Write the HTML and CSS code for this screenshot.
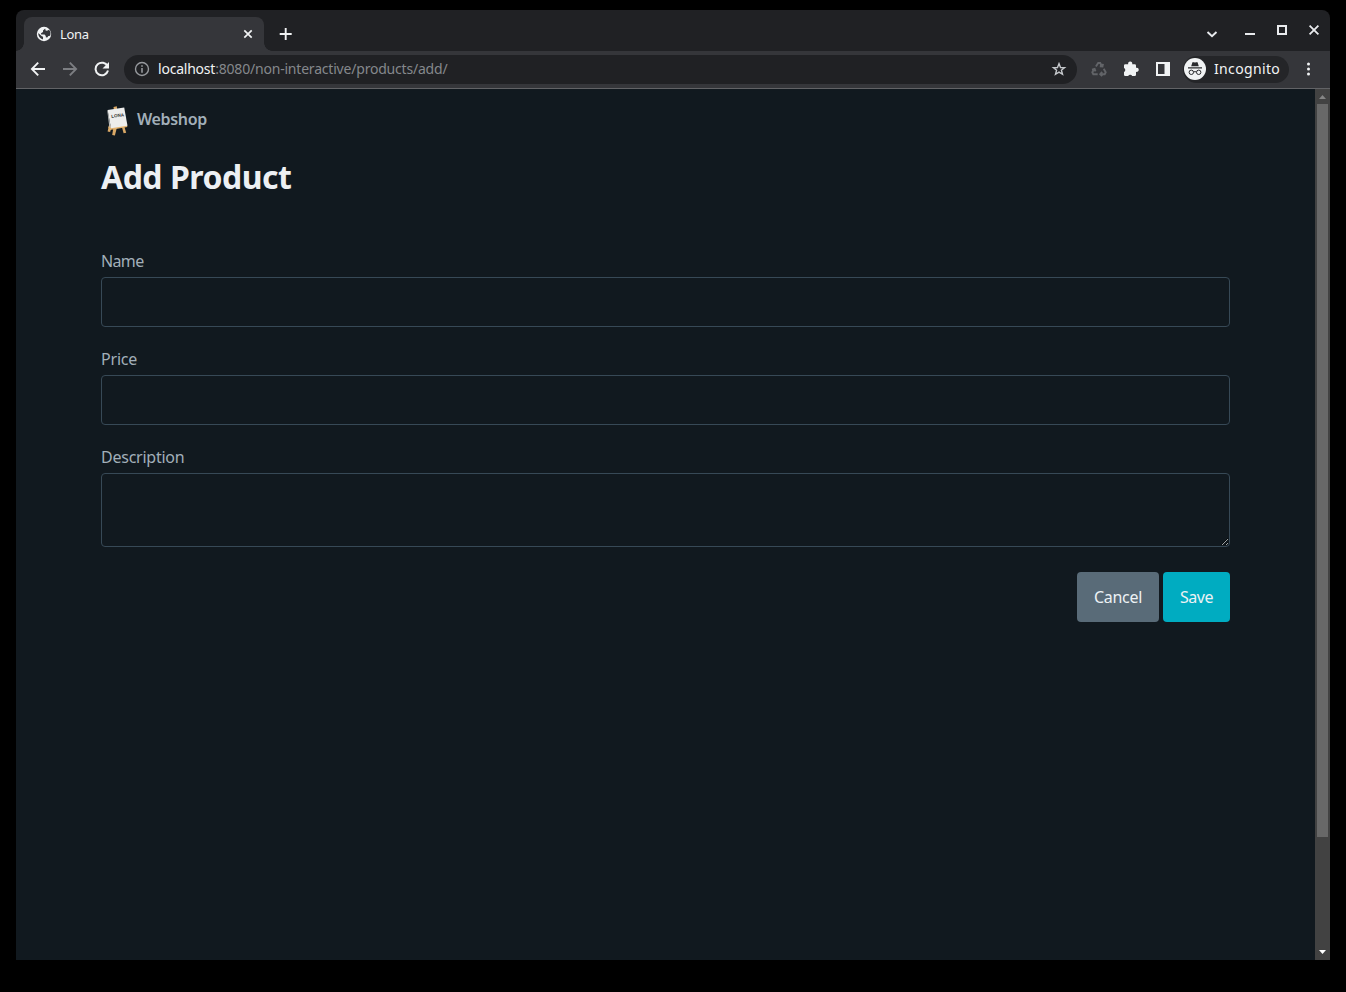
FILE: index.html
```html
<!DOCTYPE html>
<html lang="en">
<head>
<meta charset="utf-8">
<title>Lona</title>
<link rel="stylesheet" href="styles.css">
</head>
<body>
<div class="window">
  <div class="tabstrip">
    <div class="tab">
      <svg class="globe" width="16" height="16" viewBox="0 0 16 16"><circle cx="8" cy="8" r="7.2" fill="#f1f3f4"/><path d="M9.200 2.600L7 4.400v1.500L5 7.200l.200 1.300h3.400l1.200 1.400v1.300l1.400.300 1.200-1.500 1.700-.300a6 6 0 0 0-1-6L11 4.800 9.600 4.500zM2.300 7l3.500 3.200 1.300.5-.2 2.800A6 6 0 0 1 2.300 7z" fill="#35363a"/></svg>
      <span class="tab-title">Lona</span>
      <svg class="tab-close" width="10" height="10" viewBox="0 0 10 10"><path d="M1.300 1.300l7.400 7.400M8.700 1.300L1.300 8.700" stroke="#f1f3f4" stroke-width="1.700"/></svg>
    </div>
    <svg class="new-tab" width="14" height="14" viewBox="0 0 14 14"><path d="M6.700 1v12M.700 7h12" stroke="#f1f3f4" stroke-width="1.900"/></svg>
    <div class="controls">
      <svg width="12" height="12" viewBox="0 0 12 12"><path d="M1.500 4L6 8.300 10.500 4" fill="none" stroke="#e8eaed" stroke-width="1.900"/></svg>
      <svg class="minimize" width="12" height="12" viewBox="0 0 12 12"><path d="M1 9h10" stroke="#e8eaed" stroke-width="2"/></svg>
      <svg class="maximize" width="12" height="12" viewBox="0 0 12 12"><path d="M2 2h8v8H2z" fill="none" stroke="#e8eaed" stroke-width="2"/></svg>
      <svg class="close" width="12" height="12" viewBox="0 0 12 12"><path d="M1.600 1.600l8.800 8.800M10.400 1.600l-8.800 8.800" stroke="#e8eaed" stroke-width="1.800"/></svg>
    </div>
  </div>
  <div class="toolbar">
    <svg class="nav" width="16" height="16" viewBox="0 0 16 16"><path d="M15 8H2M8.200 1.600L1.900 8l6.300 6.400" fill="none" stroke="#f1f3f4" stroke-width="1.900"/></svg>
    <svg class="nav" width="16" height="16" viewBox="0 0 16 16"><path d="M1 8h13M7.800 1.600L14.100 8l-6.300 6.400" fill="none" stroke="#7c7e82" stroke-width="1.900"/></svg>
    <svg class="nav" width="16" height="16" viewBox="0 0 16 16"><path d="M13.600 5.300A6.300 6.300 0 1 0 14 9.600" fill="none" stroke="#f1f3f4" stroke-width="2"/><path d="M15 .9v6.600H8.500z" fill="#f1f3f4"/></svg>
    <div class="omnibox">
      <svg width="16" height="16" viewBox="0 0 16 16"><circle cx="8" cy="8" r="6.500" fill="none" stroke="#96999d" stroke-width="1.400"/><path d="M8 7v4.700M8 4.200v1.600" stroke="#96999d" stroke-width="1.600"/></svg>
      <span class="url"><span class="host">localhost</span>:8080/non-interactive/products/add/</span>
      <svg class="star" width="16" height="16" viewBox="0 0 16 16"><path d="M8 2.600l1.500 3.900 4.100.200-3.200 2.600 1.100 4L8 11.100l-3.500 2.200 1.100-4-3.200-2.600 4.100-.200z" fill="none" stroke="#c4c7cb" stroke-width="1.400"/></svg>
    </div>
    <div class="extensions">
      <svg width="16" height="16" viewBox="0 0 16 16" fill="none" stroke="#626468" stroke-width="1.900"><path d="M4.900 5.500L7.200 2h2l1.700 3M8.800 5.200l2.700.300.500-2.600M12.700 7.700l2 3.500-1 2H9.800M11.200 11l-2 2.200 2 2M6.700 13.200H2.300l-1-2 1.900-3.100M1 8.600l2.600-.700.900 2.500"/></svg>
      <svg width="16" height="16" viewBox="0 0 16 16"><path d="M2.300 3.200h2.900a2.100 2.100 0 1 1 4 0h2.500q1.300 0 1.300 1.300v2.300a2.100 2.100 0 1 1 0 4v3q0 1.300-1.300 1.300H9.200a2.200 2.200 0 0 0-4 0H2.300Q1 15.100 1 13.800v-2.900a2.200 2.200 0 0 0 0-4V4.500q0-1.300 1.300-1.300z" fill="#f1f3f4"/></svg>
      <svg width="16" height="16" viewBox="0 0 16 16"><path d="M1 1h14v14H1zM3 3v10h6.500V3z" fill="#f1f3f4" fill-rule="evenodd"/></svg>
    </div>
    <div class="incognito">
      <svg width="22" height="22" viewBox="0 0 22 22"><circle cx="11" cy="11" r="11" fill="#f1f3f4"/><path d="M7.200 8.300l1.100-3.600q.300-.800 1.100-.500l1.600.300 1.600-.300q.800-.300 1.100.500l1.100 3.600z" fill="#292a2d"/><path d="M4 9.900h14" stroke="#292a2d" stroke-width="1.200"/><g fill="none" stroke="#292a2d" stroke-width="1"><circle cx="7.300" cy="14.300" r="2.200"/><circle cx="14.700" cy="14.300" r="2.200"/><path d="M9.500 14q1.500-.700 3 0"/></g></svg>
      <span class="incognito-label">Incognito</span>
    </div>
    <svg class="menu" width="4" height="14" viewBox="0 0 4 14" fill="#f1f3f4"><circle cx="1.500" cy="2" r="1.500"/><circle cx="1.500" cy="7" r="1.500"/><circle cx="1.500" cy="12" r="1.500"/></svg>
  </div>
  <div class="viewport">
    <main class="page">
      <header class="brand">
        <svg width="22" height="30" viewBox="0 0 22 30"><path d="M6.500 1l3.300-.700.300 3H6.800zM2 19L.600 25.500l2.500.400L5 20zM6.500 21l-1.300 8 2.700.500L9.800 22zM14.600 20l2 7.300 2.600-.600L17 19.500z" fill="#d9a866"/><path d="M1 20.800l18.500-2.300.900 2.600L3 24z" fill="#e1b16e"/><path d="M.600 4L17.200 1.500l3.300 18.300-16.500 2.500z" fill="#ededec"/><path d="M.600 4L4 22.300l-1.800-2L.300 5z" fill="#b8bab9"/><text x="4.400" y="11.900" class="logo-text" transform="rotate(-8 5 11)">LONA</text></svg>
        <span class="brand-name">Webshop</span>
      </header>
      <h1 class="title">Add Product</h1>
      <form class="form">
        <label class="field"><span class="label l-name">Name</span><input class="input" type="text"></label>
        <label class="field"><span class="label l-price">Price</span><input class="input" type="text"></label>
        <label class="field"><span class="label l-description">Description</span><textarea class="input area"></textarea></label>
        <div class="actions">
          <button class="button cancel" type="button">Cancel</button>
          <button class="button save" type="button">Save</button>
        </div>
      </form>
    </main>
    <div class="scrollbar">
      <svg width="15" height="15" viewBox="0 0 15 15"><path d="M4 10h7L7.500 6z" fill="#858585"/></svg>
      <div class="thumb"></div>
      <svg class="down" width="15" height="15" viewBox="0 0 15 15"><path d="M4 5h7L7.500 9z" fill="#fff"/></svg>
    </div>
  </div>
</div>
</body>
</html>
```
FILE: styles.css
```css
* { box-sizing: border-box; }
body { margin: 0; padding: 10px 16px 32px; height: 992px; background: #000; font-family: "Noto Sans", "Open Sans", sans-serif; overflow: hidden; }
svg { display: block; flex: none; }
.window { height: 950px; display: flex; flex-direction: column; border-radius: 8px 8px 0 0; overflow: hidden; background: #202124; }
.tabstrip { height: 41px; flex: none; display: flex; padding: 7px 10px 0 8px; }
.tab { position: relative; width: 240px; height: 34px; padding: 0 11px 0 12px; display: flex; align-items: center; background: #35363a; border-radius: 8px 8px 0 0; }
.tab::before, .tab::after { content: ""; position: absolute; bottom: 0; width: 8px; height: 8px; }
.tab::before { left: -8px; background: radial-gradient(circle at 0 0, transparent 7.5px, #35363a 8px); }
.tab::after { right: -8px; background: radial-gradient(circle at 100% 0, transparent 7.5px, #35363a 8px); }
.tab-title { margin-left: 8px; font-size: 13px; color: #f1f3f4; letter-spacing: -.3px; }
.tab-close { margin-left: auto; }
.new-tab { margin: 10px 0 0 15px; }
.controls { margin: 11px 0 0 auto; display: flex; gap: 20px; }
.controls .minimize { margin: -3px 0 0 6px; }
.controls .maximize, .controls .close { margin-top: -4px; }
.toolbar { height: 38px; flex: none; display: flex; align-items: center; padding: 0 19px 1px 14px; background: #35363a; border-bottom: 1px solid #626366; }
.nav { margin-right: 16px; }
.omnibox { margin-left: -2px; width: 953px; height: 29px; border-radius: 15px; background: #202124; display: flex; align-items: center; padding: 0 10px; }
.url { margin-left: 8px; font-size: 14px; line-height: 20px; color: #85888c; letter-spacing: -.2px; white-space: nowrap; }
.host { color: #f1f3f4; letter-spacing: -.22px; }
.star { margin-left: auto; }
.extensions { display: flex; gap: 16px; margin-left: 14px; }
.incognito { margin-left: 12px; width: 106px; height: 27px; padding-left: 1px; border-radius: 14px; background: #242528; display: flex; align-items: center; color: #f1f3f4; }
.incognito-label { margin-left: 8px; padding-bottom: 2px; font-size: 14px; letter-spacing: .35px; }
.menu { margin-left: auto; }
.viewport { flex: 1; display: flex; background: #11191f; }
.page { flex: 1; padding: 17px 85px 0; color: #a2afb9; }
.brand { height: 30px; padding-left: 6px; display: flex; gap: 8px; }
.brand-name { font-size: 16px; line-height: 26px; font-weight: 600; letter-spacing: -.35px; }
.logo-text { font: bold 4.500px "Liberation Sans", sans-serif; fill: #333; }
.title { margin: 20px 0 0; height: 42px; line-height: 42px; font-size: 32px; font-weight: 700; color: #edf0f3; letter-spacing: -.5px; white-space: nowrap; }
.form { display: flex; flex-direction: column; gap: 20px; margin-top: 51px; }
.field { display: flex; flex-direction: column; }
.label { height: 24px; line-height: 24px; margin-bottom: 4px; font-size: 16px; align-self: flex-start; }
.l-name { letter-spacing: -.65px; }
.l-price { letter-spacing: -.2px; }
.l-description { letter-spacing: -.24px; }
.input { display: block; width: 100%; height: 50px; margin: 0; border: 1px solid #374956; border-radius: 4px; background: #11191f; outline: none; color-scheme: dark; }
.area { height: 74px; resize: vertical; }
.actions { display: flex; justify-content: flex-end; gap: 4px; margin-top: 5px; }
.button { height: 50px; padding: 0; border: 0; border-radius: 4px; font: 16px "Noto Sans", "Open Sans", sans-serif; color: #edf2f5; }
.cancel { width: 82px; background: #596b78; letter-spacing: -.3px; }
.save { width: 67px; background: #00acc1; letter-spacing: -.5px; }
.scrollbar { width: 15px; background: #424242; display: flex; flex-direction: column; align-items: center; }
.thumb { width: 11px; height: 733px; background: #686868; }
.down { margin-top: auto; }
```
